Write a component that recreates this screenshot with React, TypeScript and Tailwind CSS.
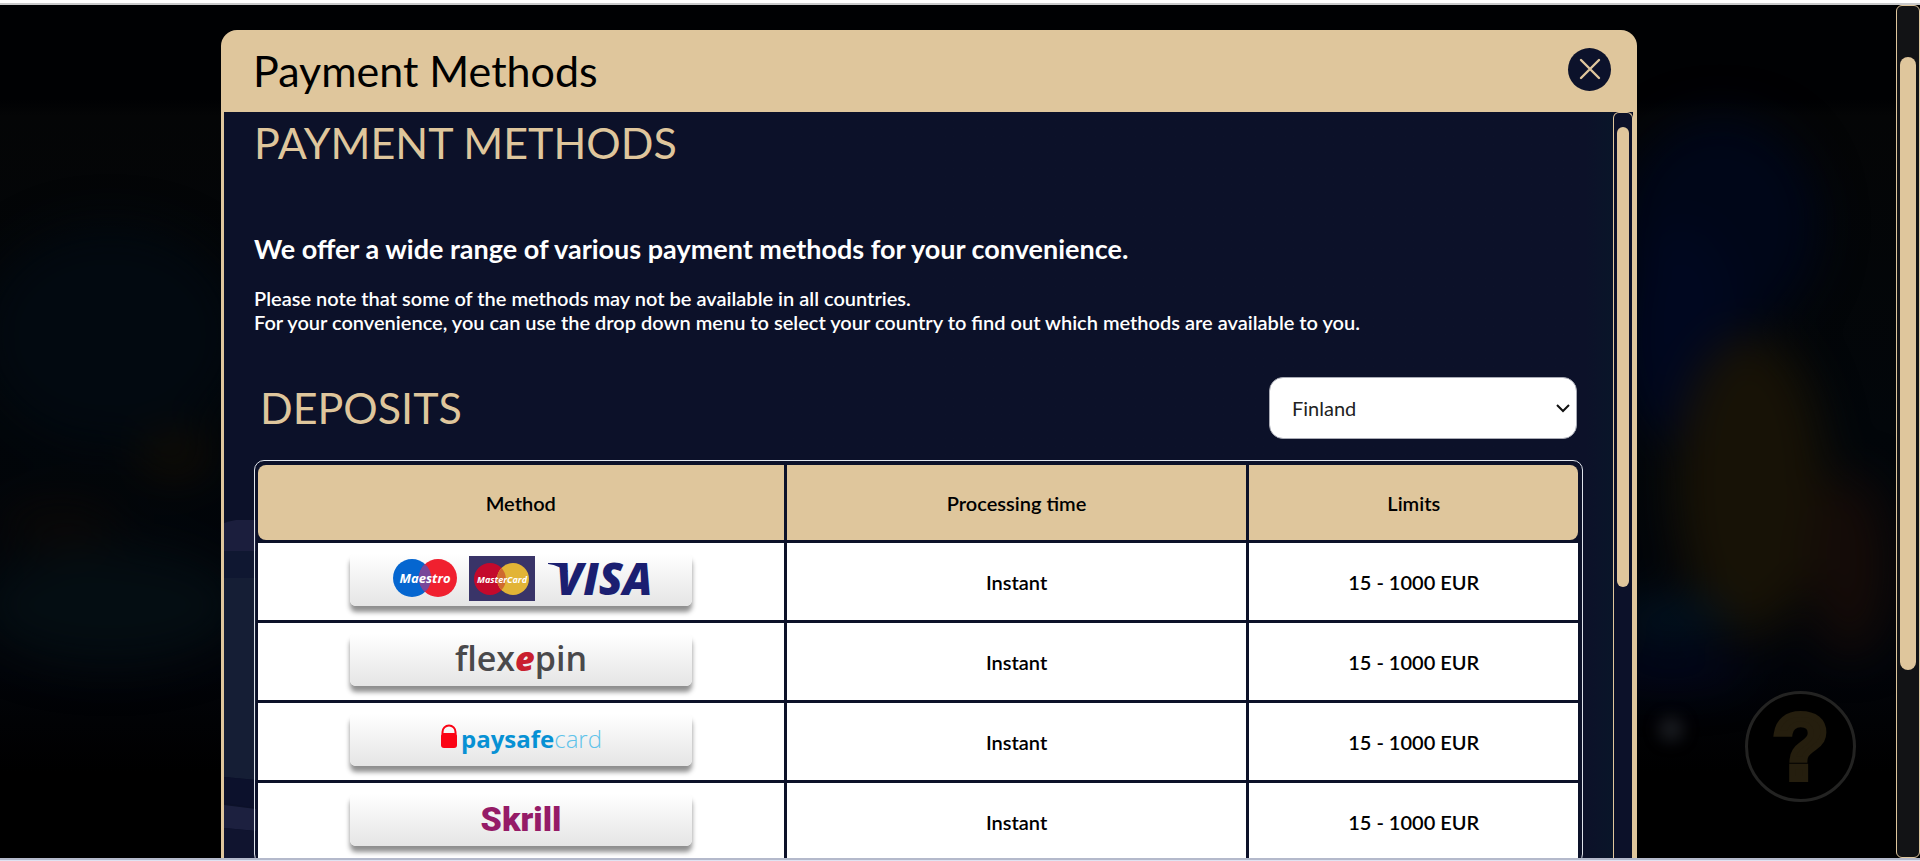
import React, { useState } from 'react';

interface PaymentMethod {
  id: string;
  logo: React.ReactNode;
  time: string;
  limits: string;
}

const CardsLogo = () => (
  <svg viewBox="0 0 342 53" className="w-full h-full overflow-visible" role="img" aria-label="Maestro, MasterCard, Visa">
    <circle cx="62" cy="25" r="19" fill="#0566d0" />
    <circle cx="88" cy="25" r="19" fill="#f0202f" />
    <path d="M75 11a19 19 0 0 1 0 28a19 19 0 0 1 0-28z" fill="#79479a" />
    <text x="75" y="30" textAnchor="middle" fill="#fff" fontFamily="Open Sans, sans-serif" fontSize="13" fontWeight="700" fontStyle="italic">Maestro</text>
    <rect x="119" y="3" width="66" height="45" fill="#393468" />
    <circle cx="140" cy="26" r="16" fill="#c4092c" />
    <circle cx="163" cy="26" r="16" fill="#e2b436" />
    <path d="M151.500 15a16 16 0 0 1 0 22a16 16 0 0 1 0-22z" fill="#cf6a2e" />
    <text x="152" y="30" textAnchor="middle" fill="#fff" fontFamily="Open Sans, sans-serif" fontSize="9" fontWeight="700" fontStyle="italic">MasterCard</text>
    <path d="M198 10h16l4 9c-6-4-12-7-20-8z" fill="#1b1f71" />
    <text x="206" y="42" fill="#1b1f71" fontFamily="Open Sans, sans-serif" fontSize="44" fontWeight="800" fontStyle="italic">VISA</text>
  </svg>
);

const FlexepinLogo = () => (
  <svg viewBox="0 0 342 53" className="w-full h-full overflow-visible" role="img" aria-label="flexepin">
    <text x="171" y="38" textAnchor="middle" fill="#4a494b" fontFamily="Open Sans, sans-serif" fontSize="34" fontWeight="600">
      flex<tspan fill="#c9202f" fontWeight="800" fontStyle="italic">e</tspan>pin
    </text>
  </svg>
);

const PaysafecardLogo = () => (
  <svg viewBox="0 0 342 53" className="w-full h-full" role="img" aria-label="paysafecard">
    <path d="M92.500 21v-2a6.500 6.500 0 0 1 13 0v2" fill="none" stroke="#fb0314" strokeWidth="2" />
    <rect x="91" y="20" width="16" height="15" rx="3" fill="#fb0314" />
    <text x="111" y="35" fill="#0791d4" fontFamily="Open Sans, sans-serif" fontSize="24" fontWeight="700">
      paysafe<tspan fill="#5fc3ea" fontWeight="300">card</tspan>
    </text>
  </svg>
);

const SkrillLogo = () => (
  <svg viewBox="0 0 342 53" className="w-full h-full" role="img" aria-label="Skrill">
    <text x="171" y="38" textAnchor="middle" fill="#951b67" fontFamily="Roboto, sans-serif" fontSize="34" fontWeight="900">Skrill</text>
  </svg>
);

const METHODS: PaymentMethod[] = [
  { id: 'cards', logo: <CardsLogo />, time: 'Instant', limits: '15 - 1000 EUR' },
  { id: 'flexepin', logo: <FlexepinLogo />, time: 'Instant', limits: '15 - 1000 EUR' },
  { id: 'paysafecard', logo: <PaysafecardLogo />, time: 'Instant', limits: '15 - 1000 EUR' },
  { id: 'skrill', logo: <SkrillLogo />, time: 'Instant', limits: '15 - 1000 EUR' },
];

// Dimmed lobby artwork behind the dialog
const Backdrop = () => (
  <svg className="absolute inset-0 w-full h-full" viewBox="0 0 1896 853" preserveAspectRatio="none" aria-hidden="true">
    <defs>
      <filter id="soft" x="-50%" y="-50%" width="200%" height="200%" colorInterpolationFilters="sRGB">
        <feGaussianBlur stdDeviation="22" />
      </filter>
      <filter id="glow" x="-100%" y="-100%" width="300%" height="300%" colorInterpolationFilters="sRGB">
        <feGaussianBlur stdDeviation="7" />
      </filter>
      <linearGradient id="shade" x1="0" y1="0" x2="0" y2="1">
        <stop offset="0" stopColor="#000103" />
        <stop offset="0.11" stopColor="#000103" />
        <stop offset="0.13" stopColor="#040506" />
        <stop offset="0.5" stopColor="#02060a" />
        <stop offset="0.78" stopColor="#020409" />
        <stop offset="0.9" stopColor="#000000" />
      </linearGradient>
    </defs>
    <rect width="1896" height="853" fill="url(#shade)" />
    <g filter="url(#soft)">
      <ellipse cx="110" cy="330" rx="130" ry="110" fill="#020910" />
      <ellipse cx="175" cy="450" rx="36" ry="22" fill="#120d04" />
      <ellipse cx="60" cy="520" rx="60" ry="24" fill="#0a0807" />
      <ellipse cx="110" cy="600" rx="130" ry="60" fill="#040d12" />
      <ellipse cx="1720" cy="220" rx="100" ry="110" fill="#000618" />
      <ellipse cx="1680" cy="330" rx="60" ry="110" fill="#00071f" />
      <ellipse cx="1750" cy="480" rx="75" ry="150" fill="#171206" />
      <ellipse cx="1850" cy="560" rx="40" ry="90" fill="#140b08" />
      <ellipse cx="1670" cy="612" rx="60" ry="16" fill="#011628" />
      <ellipse cx="1670" cy="665" rx="80" ry="16" fill="#020720" />
    </g>
    <circle cx="1671" cy="724" r="13" fill="#16181d" filter="url(#glow)" />
  </svg>
);

// Faint watermark on the left side of the panel
const Watermark = () => (
  <svg className="absolute left-0 top-0 w-8 h-[746px]" viewBox="0 0 32 746" aria-hidden="true">
    <path d="M0 411q6-2 12-3h20v31H0z" fill="#1b1e3d" />
    <path d="M0 439h32v27H0z" fill="#0f1731" />
    <path d="M0 466h32v202l-32-3z" fill="#151e35" />
    <path d="M0 665l32 3v28l-32-5z" fill="#0c112c" />
    <path d="M0 693l32 4v22l-32-3z" fill="#1c203f" />
    <path d="M0 716l32 3v27H0z" fill="#10142f" />
  </svg>
);

export default function App() {
  const [open, setOpen] = useState(true);
  const [country, setCountry] = useState('Finland');

  return (
    <div className="h-screen flex flex-col overflow-hidden bg-black font-['Lato',sans-serif]">
      <div className="h-[5px] shrink-0 bg-white border-b-2 border-[#c9cacb]" />

      <main className="flex-1 min-h-0 flex">
        <div className="relative flex-1 min-w-0 flex overflow-hidden">
          <Backdrop />

          <button
            type="button"
            aria-label="Help"
            className="absolute right-10 bottom-14 size-[111px] rounded-full border-3 border-[#232322] bg-black flex items-center justify-center font-['Liberation_Sans',sans-serif] text-[92px] leading-none font-bold text-[#251e0e] [-webkit-text-stroke:6px_#251e0e]"
          >
            ?
          </button>

          {open && (
            <section
              role="dialog"
              aria-label="Payment Methods"
              className="relative flex-1 min-w-0 flex flex-col ml-[221px] mr-[259px] mt-[25px] rounded-t-2xl bg-[#dfc69c] overflow-hidden"
            >
              <header className="h-[82px] shrink-0 flex items-center justify-between pl-8 pr-[26px]">
                <h2 className="text-[43px] leading-12 text-black">Payment Methods</h2>
                <button
                  type="button"
                  aria-label="Close"
                  onClick={() => setOpen(false)}
                  className="size-[43px] rounded-full bg-[#0c122b] flex items-center justify-center mb-1"
                >
                  <svg viewBox="0 0 22 22" className="size-[22px]" fill="none" stroke="#dfc69c" strokeWidth="2.400" strokeLinecap="round">
                    <path d="M2 2l18 18M20 2L2 20" />
                  </svg>
                </button>
              </header>

              <div className="flex-1 min-h-0 flex ml-[3px] mr-1 bg-[#0c1129]">
                <div className="relative flex-1 min-w-0 overflow-hidden bg-linear-to-r from-[#0c1129] from-98% to-[#091529] pt-[7px] px-[30px]">
                  <Watermark />
                  <div className="relative text-white">
                    <h1 className="text-[43px] leading-12 text-[#dfc69c]">PAYMENT METHODS</h1>
                    <p className="mt-[66px] text-[27px] leading-8 font-bold">
                      We offer a wide range of various payment methods for your convenience.
                    </p>
                    <p className="mt-[21px] text-xl leading-6 font-semibold">
                      Please note that some of the methods may not be available in all countries.
                      <br />
                      For your convenience, you can use the drop down menu to select your country to find out which methods are available to you.
                    </p>

                    <div className="mt-[43px] flex items-center justify-between px-1.5">
                      <h1 className="text-[43px] leading-12 text-[#dfc69c]">DEPOSITS</h1>
                      <div className="relative">
                        <select
                          aria-label="Country"
                          value={country}
                          onChange={(e) => setCountry(e.target.value)}
                          className="appearance-none w-[308px] h-[62px] rounded-[14px] border border-[#a9abb5] bg-white pl-[22px] text-xl text-[#222]"
                        >
                          <option>Finland</option>
                          <option>Germany</option>
                          <option>Norway</option>
                        </select>
                        <svg viewBox="0 0 14 9" className="absolute right-[7px] top-[27px] w-3.5 h-[9px] pointer-events-none" fill="none" stroke="#111" strokeWidth="2">
                          <path d="M1 1l6 6 6-6" />
                        </svg>
                      </div>
                    </div>

                    <table className="mt-[21px] pt-px pr-px w-full table-fixed border-separate border-spacing-[3px] rounded-[10px] border border-[#dfe3ea] text-xl text-black text-center">
                      <thead>
                        <tr className="h-[75px]">
                          <th className="w-[40%] bg-[#dfc69c] font-semibold rounded-l-lg">Method</th>
                          <th className="w-[35%] bg-[#dfc69c] font-semibold">Processing time</th>
                          <th className="w-[25%] bg-[#dfc69c] font-semibold rounded-r-lg">Limits</th>
                        </tr>
                      </thead>
                      <tbody>
                        {METHODS.map((method) => (
                          <tr key={method.id} className="bg-white font-semibold">
                            <td className="pt-2.5 pb-3.5">
                              <div className="mx-auto w-[342px] h-[53px] rounded-md bg-linear-to-b from-white to-[#e5e5e5] shadow-[0_6px_5px_#8f8f8f]">
                                {method.logo}
                              </div>
                            </td>
                            <td>{method.time}</td>
                            <td>{method.limits}</td>
                          </tr>
                        ))}
                      </tbody>
                    </table>
                  </div>
                </div>

                {/* Dialog scrollbar */}
                <div className="w-5 shrink-0 rounded-t-md border-x border-t border-[#dfc69c] px-[3px] pt-3.5">
                  <div className="h-[460px] rounded-full bg-[#dfc69c]" />
                </div>
              </div>
            </section>
          )}
        </div>

        {/* Page scrollbar */}
        <div className="w-6 shrink-0 rounded-md border border-[#dfc69c] bg-[#121315] px-[3px] pt-[51px]">
          <div className="h-[613px] rounded-full bg-[#dfc69c]" />
        </div>
      </main>

      <div className="h-[3px] shrink-0 bg-[#dfe3f2] border-t-2 border-[#b4b9cb]" />
    </div>
  );
}
